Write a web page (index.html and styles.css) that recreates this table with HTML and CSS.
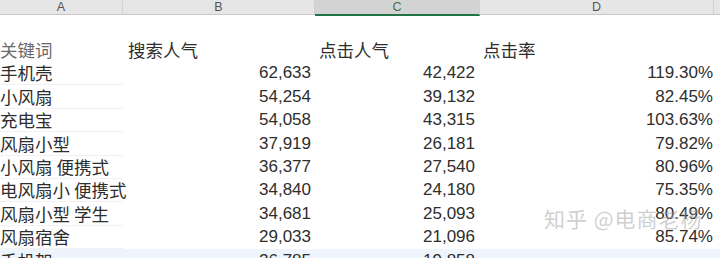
FILE: index.html
```html
<!DOCTYPE html>
<html lang="zh">
<head>
<meta charset="utf-8">
<link rel="stylesheet" href="styles.css">
</head>
<body>
<div class="sheet">
  <div class="colhead">
    <div class="ch ch-a">A</div>
    <div class="ch ch-b">B</div>
    <div class="ch ch-c sel">C</div>
    <div class="ch ch-d">D</div>
    <div class="ch ch-e"></div>
  </div>
  <div class="gap"></div>
  <div class="grid">
    <div class="row head">
      <div class="c a muted">关键词</div><div class="c b l">搜索人气</div><div class="c cc l">点击人气</div><div class="c d l">点击率</div>
    </div>
    <div class="row"><div class="c a">手机壳</div><div class="c b">62,633</div><div class="c cc">42,422</div><div class="c d">119.30%</div></div>
    <div class="row"><div class="c a">小风扇</div><div class="c b">54,254</div><div class="c cc">39,132</div><div class="c d">82.45%</div></div>
    <div class="row"><div class="c a">充电宝</div><div class="c b">54,058</div><div class="c cc">43,315</div><div class="c d">103.63%</div></div>
    <div class="row"><div class="c a">风扇小型</div><div class="c b">37,919</div><div class="c cc">26,181</div><div class="c d">79.82%</div></div>
    <div class="row"><div class="c a">小风扇 便携式</div><div class="c b">36,377</div><div class="c cc">27,540</div><div class="c d">80.96%</div></div>
    <div class="row"><div class="c a">电风扇小 便携式</div><div class="c b">34,840</div><div class="c cc">24,180</div><div class="c d">75.35%</div></div>
    <div class="row"><div class="c a">风扇小型 学生</div><div class="c b">34,681</div><div class="c cc">25,093</div><div class="c d">80.49%</div></div>
    <div class="row"><div class="c a">风扇宿舍</div><div class="c b">29,033</div><div class="c cc">21,096</div><div class="c d">85.74%</div></div>
    <div class="row last"><div class="c a">手机架</div><div class="c b">26,785</div><div class="c cc">19,858</div><div class="c d"></div></div>
  </div>
  <div class="watermark">知乎 @电商老杨</div>
</div>
</body>
</html>
```

FILE: styles.css
```css
html, body {
  margin: 0;
  padding: 0;
  background: #ffffff;
}
body {
  width: 720px;
  height: 258px;
  overflow: hidden;
}
.sheet {
  position: relative;
  width: 720px;
  height: 258px;
  overflow: hidden;
}
.colhead {
  display: grid;
  grid-template-columns: 123px 192px 165px 234px 6px;
  height: 15px;
  background: #e6e6e6;
  border-bottom: 1px solid #c8c8c8;
  box-sizing: border-box;
}
.ch {
  font-family: "Liberation Sans", Arial, sans-serif;
  font-size: 12.5px;
  line-height: 14px;
  color: #555;
  text-align: center;
  border-right: 1px solid #d2d2d2;
}
.ch-e { border-right: none; }
.ch.sel {
  background: #d3d3d3;
  color: #3f6e55;
  border-bottom: 2px solid #217346;
  margin-bottom: -1px;
}
.gap { height: 23px; }
.grid {
  display: flex;
  flex-direction: column;
}
.row {
  display: grid;
  grid-template-columns: 123px 192px 165px 234px;
  height: 23.4px;
  font-size: 17px;
  line-height: 23px;
  color: #2e2e2e;
}
.c {
  white-space: nowrap;
  overflow: visible;
}
.a {
  font-family: "Noto Sans CJK SC", sans-serif;
  font-size: 17.5px;
  border-bottom: 1px solid #f1f1f1;
  box-sizing: border-box;
  padding-left: 0;
}
.b, .cc, .d {
  font-family: "Liberation Sans", Arial, sans-serif;
  text-align: right;
}
.b { padding-right: 4px; }
.cc { padding-right: 5px; }
.d { padding-right: 1px; }
.l {
  font-family: "Noto Sans CJK SC", sans-serif;
  font-size: 17.5px;
  text-align: left;
  padding-left: 5px;
}
.cc.l { padding-left: 4px; }
.d.l { padding-left: 3px; }
.muted { color: #6a6a6a; }
.head .a { border-bottom: none; }
.last { background: #eef4fb; }
.last .a { border-bottom: none; }
.watermark {
  position: absolute;
  left: 544px;
  top: 204px;
  font-family: "Noto Sans CJK SC", sans-serif;
  font-size: 21px;
  line-height: 28px;
  color: rgba(160, 160, 160, 0.5);
  letter-spacing: 1px;
  pointer-events: none;
}
```
